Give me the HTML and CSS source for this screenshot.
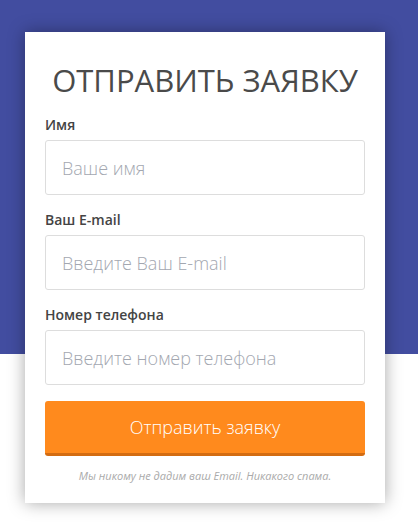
FILE: index.html
```html
<!DOCTYPE html>
<html lang="ru">
<head>
  <meta charset="UTF-8">
  <meta name="viewport" content="width=device-width, initial-scale=1.0">
  <title>Отправить заявку</title>
  <link rel="stylesheet" href="styles.css">
</head>
<body>

  <!-- Request form -->
  <div class="card">
    <h1>Отправить заявку</h1>

    <label for="name">Имя</label>
    <input type="text" id="name" placeholder="Ваше имя">

    <label for="email">Ваш E-mail</label>
    <input type="email" id="email" placeholder="Введите Ваш E-mail">

    <label for="phone">Номер телефона</label>
    <input type="text" id="phone" placeholder="Введите номер телефона">

    <button class="btn">Отправить заявку</button>
    <p class="note">Мы никому не дадим ваш Email. Никакого спама.</p>
  </div>

</body>
</html>
```

FILE: styles.css
```css
/* General Styles */
body {
  font-family: 'Open Sans', sans-serif;
  margin: 0;
  padding: 32px 0 0;
  background: linear-gradient(#424da0 354px, #fff 354px);
  min-height: 532px;
  box-sizing: border-box;
}

.card {
  width: 360px;
  margin-left: 25px;
  padding: 28px 20px 20px;
  box-sizing: border-box;
  background-color: #fff;
  box-shadow: 0 0 16px rgba(0, 0, 0, 0.35);
}

h1 {
  margin: 0 0 16px;
  text-align: center;
  text-transform: uppercase;
  font-size: 31px;
  font-weight: 500;
  line-height: 40px;
  color: #4a4a4a;
}

label {
  display: block;
  font-size: 14px;
  font-weight: 600;
  line-height: 18px;
  color: #444;
  margin-bottom: 6px;
}

input[type="text"], input[type="email"] {
  display: block;
  width: 100%;
  height: 55px;
  box-sizing: border-box;
  padding: 0 16px;
  margin: 0 0 16px;
  border: 1px solid #ddd;
  border-radius: 3px;
  outline: none;
  font-family: inherit;
  font-size: 18px;
  font-weight: 300;
  color: #444;
}

input::placeholder {
  color: #a3a7b0;
}

.btn {
  display: block;
  width: 100%;
  height: 55px;
  border: none;
  border-bottom: 3px solid #d36c12;
  border-radius: 3px;
  background-color: #ff8a1d;
  color: #fff;
  font-family: inherit;
  font-size: 18px;
  font-weight: 300;
  cursor: pointer;
}

.note {
  margin: 12px 0 0;
  text-align: center;
  font-size: 11px;
  font-style: italic;
  color: #aaa;
}
```
